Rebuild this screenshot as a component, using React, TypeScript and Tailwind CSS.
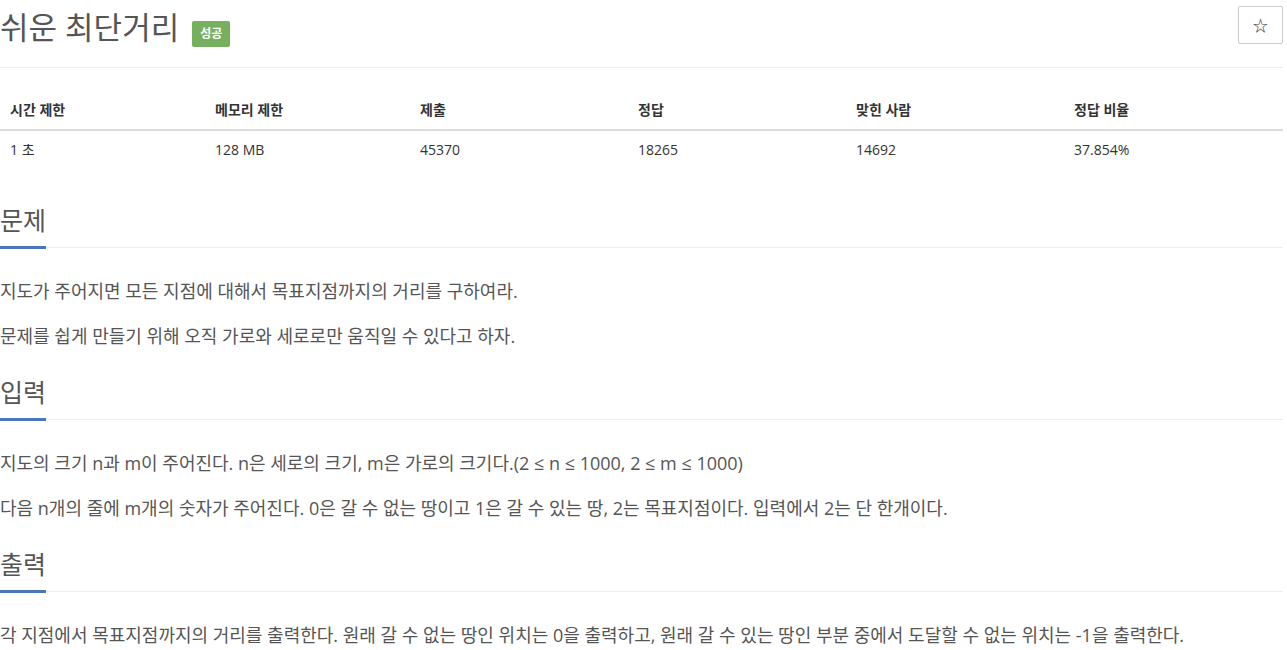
const font = "font-['Open_Sans','Noto_Sans_CJK_KR',sans-serif]";

const stats = [
  { label: "시간 제한", value: "1 초" },
  { label: "메모리 제한", value: "128 MB" },
  { label: "제출", value: "45370" },
  { label: "정답", value: "18265" },
  { label: "맞힌 사람", value: "14692" },
  { label: "정답 비율", value: "37.854%" },
];

function Headline({ title }: { title: string }) {
  return (
    <div className="flex border-b border-[#eee]">
      <h2 className="-mb-[2px] border-b-[3px] border-[#4a76b9] pb-[13px] text-[25px] leading-[26px] text-[#555]">
        {title}
      </h2>
    </div>
  );
}

function Section({ title, paragraphs }: { title: string; paragraphs: string[] }) {
  return (
    <section className="mt-[30px] first:mt-0">
      <Headline title={title} />
      <div className="mt-[30px] flex flex-col gap-[19px]">
        {paragraphs.map((p) => (
          <p key={p} className="text-[18px] leading-[26px] text-[#555]">
            {p}
          </p>
        ))}
      </div>
    </section>
  );
}

export default function App() {
  return (
    <div className={`${font} w-[1283px] bg-white`}>
      <div className="flex h-[68px] items-start justify-between border-b border-[#eee] pt-[6px]">
        <div className="mt-[3px] flex items-end gap-[13px]">
          <h1 className="text-[31px] leading-[36px] text-[#555]">쉬운 최단거리</h1>
          <span className="mb-[-2px] h-[26px] rounded-[2px] bg-[#76b05f] px-[8px] text-[12px] font-bold leading-[26px] text-white">
            성공
          </span>
        </div>
        <button className="flex h-[38px] w-[45px] items-center justify-center rounded-[2px] border border-[#ccc] bg-white text-[15px] text-[#333]">
          ☆
        </button>
      </div>

      <div className="mt-[22px] text-[14px] leading-[20px]">
        <div className="grid grid-cols-[205px_205px_218px_218px_218px_1fr] border-b-2 border-[#ddd]">
          {stats.map((s) => (
            <div key={s.label} className="px-[10px] pt-[10px] pb-[9px] font-bold text-[#333]">
              {s.label}
            </div>
          ))}
        </div>
        <div className="grid grid-cols-[205px_205px_218px_218px_218px_1fr]">
          {stats.map((s) => (
            <div key={s.label} className="px-[10px] pt-[9px] pb-[9px] text-[#333]">
              {s.value}
            </div>
          ))}
        </div>
      </div>

      <div className="mt-[38px] flex flex-col">
        <Section
          title="문제"
          paragraphs={[
            "지도가 주어지면 모든 지점에 대해서 목표지점까지의 거리를 구하여라.",
            "문제를 쉽게 만들기 위해 오직 가로와 세로로만 움직일 수 있다고 하자.",
          ]}
        />
        <Section
          title="입력"
          paragraphs={[
            "지도의 크기 n과 m이 주어진다. n은 세로의 크기, m은 가로의 크기다.(2 ≤ n ≤ 1000, 2 ≤ m ≤ 1000)",
            "다음 n개의 줄에 m개의 숫자가 주어진다. 0은 갈 수 없는 땅이고 1은 갈 수 있는 땅, 2는 목표지점이다. 입력에서 2는 단 한개이다.",
          ]}
        />
        <Section
          title="출력"
          paragraphs={[
            "각 지점에서 목표지점까지의 거리를 출력한다. 원래 갈 수 없는 땅인 위치는 0을 출력하고, 원래 갈 수 있는 땅인 부분 중에서 도달할 수 없는 위치는 -1을 출력한다.",
          ]}
        />
      </div>
    </div>
  );
}
